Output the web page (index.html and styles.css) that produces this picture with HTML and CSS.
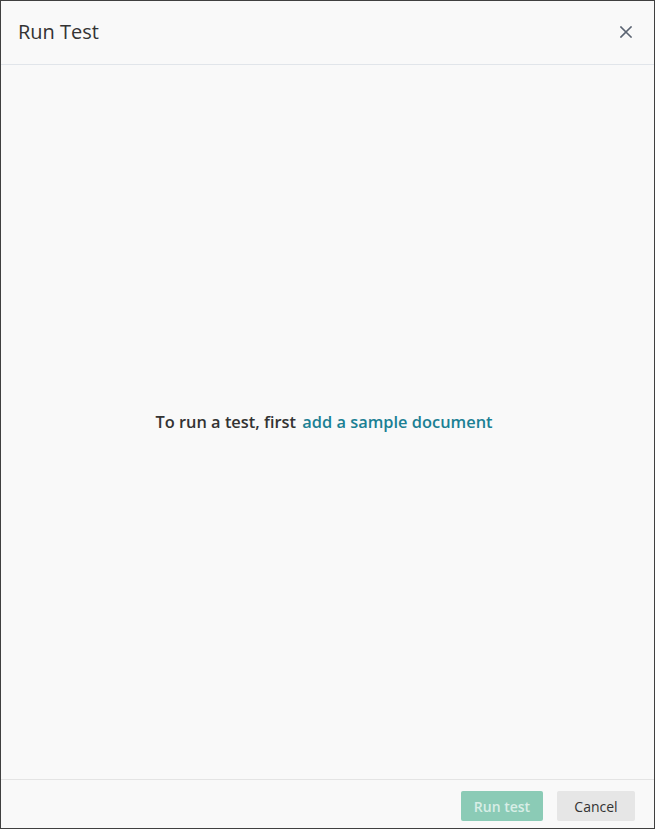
FILE: index.html
```html
<!DOCTYPE html>
<html>
<head>
<meta charset="utf-8">
<link rel="stylesheet" href="styles.css">
</head>
<body>
<div class="dialog">
  <header class="dialog-header">
    <h1 class="dialog-title">Run Test</h1>
    <button class="close-btn" aria-label="Close">
      <svg width="12" height="12" viewBox="0 0 12 12"><path d="M1 1L11 11M11 1L1 11" stroke="#5b6472" stroke-width="1.6" stroke-linecap="square"/></svg>
    </button>
  </header>
  <main class="dialog-body">
    <p class="empty-msg">To run a test, first <a class="link" href="#">add a sample document</a></p>
  </main>
  <footer class="dialog-footer">
    <button class="btn btn-primary" disabled>Run test</button>
    <button class="btn btn-secondary">Cancel</button>
  </footer>
</div>
</body>
</html>
```

FILE: styles.css
```css
* { box-sizing: border-box; }
html, body { margin: 0; padding: 0; }
body {
  font-family: "Open Sans", "Noto Sans", sans-serif;
  background: #f9f9f9;
  color: #333;
}
.dialog {
  width: 655px;
  height: 829px;
  border: 1px solid #404040;
  background: #f9f9f9;
  display: flex;
  flex-direction: column;
}
.dialog-header {
  height: 64px;
  border-bottom: 1px solid #e1e5ea;
  display: flex;
  align-items: center;
  justify-content: space-between;
  padding: 0 22px 2px 17px;
}
.dialog-title {
  margin: 0;
  font-size: 20px;
  font-weight: 400;
  color: #333;
}
.close-btn {
  border: 0;
  background: none;
  padding: 0;
  width: 12px;
  height: 12px;
  display: flex;
  cursor: pointer;
}
.dialog-body {
  flex: 1;
  display: flex;
  align-items: center;
  justify-content: center;
}
.empty-msg {
  margin: 0 7px 2px 0;
  font-size: 16.4px;
  font-weight: 600;
  color: #333;
}
.link {
  color: #1b8094;
  text-decoration: none;
  margin-left: 2px;
}
.dialog-footer {
  height: 49px;
  border-top: 1px solid #e4e4e4;
  display: flex;
  justify-content: flex-end;
  align-items: flex-start;
  gap: 14px;
  padding: 11px 19px 0 0;
}
.btn {
  height: 30px;
  border: 0;
  border-radius: 2px;
  font-family: "Open Sans", "Noto Sans", sans-serif;
  font-size: 14px;
  padding: 0 12px;
}
.btn-primary {
  width: 82px;
  background: #8bcbb6;
  color: #d8eee6;
  font-weight: 600;
}
.btn-secondary {
  width: 78px;
  background: #e6e6e6;
  color: #333;
}
```
